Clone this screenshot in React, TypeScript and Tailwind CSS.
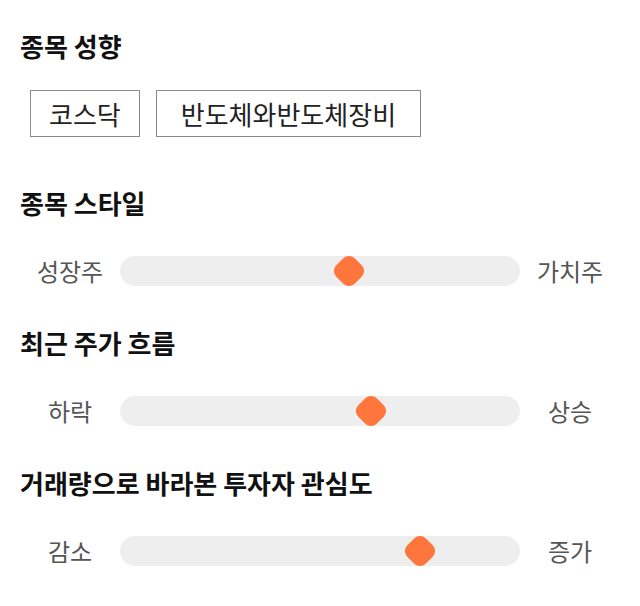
const font = { fontFamily: '"Noto Sans CJK KR", "Noto Sans", sans-serif' };

const tags = [
  { label: "코스닥", pad: "px-[18px]" },
  { label: "반도체와반도체장비", pad: "px-[24px]" },
];

const sliders = [
  { title: "종목 스타일", left: "성장주", right: "가치주", pos: 229 },
  { title: "최근 주가 흐름", left: "하락", right: "상승", pos: 251 },
  { title: "거래량으로 바라본 투자자 관심도", left: "감소", right: "증가", pos: 300 },
];

function Heading({ children }: { children: React.ReactNode }) {
  return (
    <h2 className="text-[26px] font-bold leading-[32px] text-[#111111]">
      {children}
    </h2>
  );
}

function Slider({ left, right, pos }: { left: string; right: string; pos: number }) {
  return (
    <div className="flex items-center">
      <div className="w-[100px] text-center text-[24px] leading-[30px] text-[#555555]">{left}</div>
      <div className="relative h-[30px] w-[400px] rounded-full bg-[#eeeeee]">
        <div
          className="absolute top-[2px] h-[26px] w-[26px] -translate-x-1/2 rotate-45 rounded-[8px] bg-[#ff763d]"
          style={{ left: pos }}
        />
      </div>
      <div className="w-[100px] text-center text-[24px] leading-[30px] text-[#555555]">{right}</div>
    </div>
  );
}

export default function App() {
  return (
    <div className="min-h-[606px] w-[640px] bg-white px-5 pt-[30px]" style={font}>
      <Heading>종목 성향</Heading>
      <div className="ml-[10px] mt-[28px] flex gap-4">
        {tags.map((t) => (
          <div
            key={t.label}
            className={`flex h-[47px] items-center border border-[#8a8a8a] text-[26px] text-[#222222] ${t.pad}`}
          >
            {t.label}
          </div>
        ))}
      </div>
      {sliders.map((s, i) => (
        <div key={s.title} className={i === 0 ? "mt-[50px]" : "mt-[41px]"}>
          <Heading>{s.title}</Heading>
          <div className="mt-[37px]">
            <Slider left={s.left} right={s.right} pos={s.pos} />
          </div>
        </div>
      ))}
    </div>
  );
}
